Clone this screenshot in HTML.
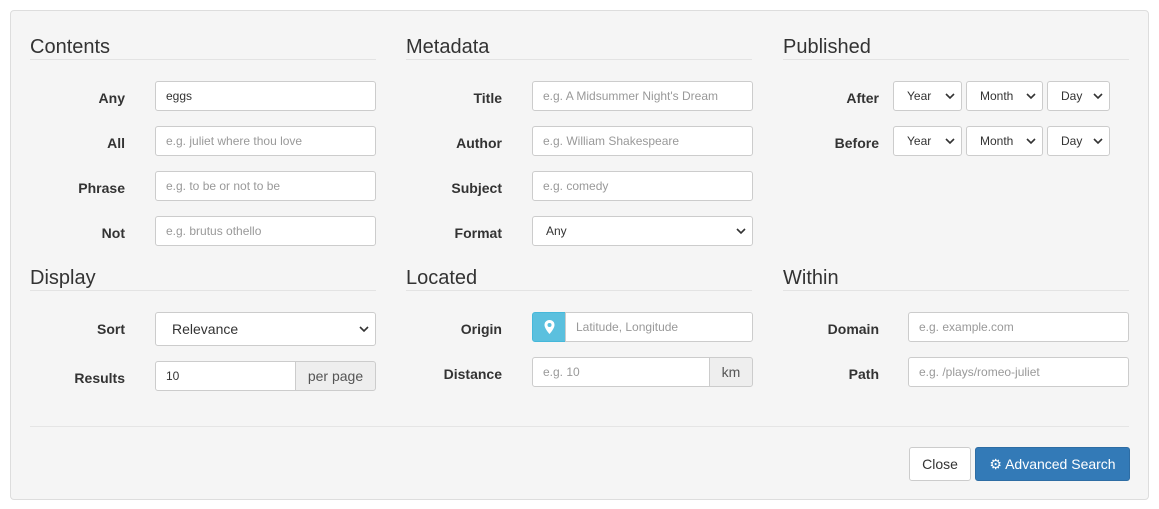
<!DOCTYPE html>
<html><head><style>
*{box-sizing:border-box}
body{margin:0;background:#fff;font-family:"Liberation Sans",sans-serif;color:#333;width:1159px;height:509px;position:relative;overflow:hidden}
.panel{position:absolute;left:10px;top:10px;width:1139px;height:490px;background:#f5f5f5;border:1px solid #ddd;border-radius:4px}
.a{position:absolute}
h3{position:absolute;margin:0;font-weight:normal;font-size:20px;color:#333;border-bottom:1px solid #e3e3e3;width:346px;height:26px;line-height:26px}
.lb{position:absolute;font-weight:bold;font-size:14px;text-align:right;color:#333}
.in{position:absolute;background:#fff;border:1px solid #ccc;border-radius:3px;font-size:12px;color:#999;padding-left:10px;height:30px;line-height:28px}
.v{color:#333}
.sel{position:absolute;background:#fff;border:1px solid #ccc;border-radius:3px;font-size:12px;color:#333;padding-left:13px;height:30px;line-height:28px}
.sel svg{position:absolute;right:6px;top:10px}
.ad{position:absolute;background:#eee;border:1px solid #ccc;border-radius:0 3px 3px 0;font-size:14px;color:#555;text-align:center;height:30px;line-height:28px}
.btn{position:absolute;border-radius:3px;font-size:14px;text-align:center;height:34px;line-height:32px}
</style></head><body>
<div class="panel"></div>
<h3 style="left:30px;top:34px">Contents</h3>
<h3 style="left:406px;top:34px">Metadata</h3>
<h3 style="left:783px;top:34px">Published</h3>
<h3 style="left:30px;top:265px">Display</h3>
<h3 style="left:406px;top:265px">Located</h3>
<h3 style="left:783px;top:265px">Within</h3>

<div class="lb" style="left:30px;width:95px;top:90px">Any</div>
<div class="in v" style="left:155px;top:81px;width:221px">eggs</div>
<div class="lb" style="left:30px;width:95px;top:135px">All</div>
<div class="in" style="left:155px;top:126px;width:221px">e.g. juliet where thou love</div>
<div class="lb" style="left:30px;width:95px;top:180px">Phrase</div>
<div class="in" style="left:155px;top:171px;width:221px">e.g. to be or not to be</div>
<div class="lb" style="left:30px;width:95px;top:225px">Not</div>
<div class="in" style="left:155px;top:216px;width:221px">e.g. brutus othello</div>

<div class="lb" style="left:406px;width:96px;top:90px">Title</div>
<div class="in" style="left:532px;top:81px;width:221px">e.g. A Midsummer Night's Dream</div>
<div class="lb" style="left:406px;width:96px;top:135px">Author</div>
<div class="in" style="left:532px;top:126px;width:221px">e.g. William Shakespeare</div>
<div class="lb" style="left:406px;width:96px;top:180px">Subject</div>
<div class="in" style="left:532px;top:171px;width:221px">e.g. comedy</div>
<div class="lb" style="left:406px;width:96px;top:225px">Format</div>
<div class="sel" style="left:532px;top:216px;width:221px">Any<svg width="10" height="8" viewBox="0 0 10 8"><path d="M1 2l4 4 4-4" stroke="#333" stroke-width="1.6" fill="none"/></svg></div>

<div class="lb" style="left:783px;width:96px;top:90px">After</div>
<div class="sel" style="left:893px;top:81px;width:69px">Year<svg width="10" height="8" viewBox="0 0 10 8"><path d="M1 2l4 4 4-4" stroke="#333" stroke-width="1.6" fill="none"/></svg></div>
<div class="sel" style="left:966px;top:81px;width:77px">Month<svg width="10" height="8" viewBox="0 0 10 8"><path d="M1 2l4 4 4-4" stroke="#333" stroke-width="1.6" fill="none"/></svg></div>
<div class="sel" style="left:1047px;top:81px;width:63px">Day<svg width="10" height="8" viewBox="0 0 10 8"><path d="M1 2l4 4 4-4" stroke="#333" stroke-width="1.6" fill="none"/></svg></div>
<div class="lb" style="left:783px;width:96px;top:135px">Before</div>
<div class="sel" style="left:893px;top:126px;width:69px">Year<svg width="10" height="8" viewBox="0 0 10 8"><path d="M1 2l4 4 4-4" stroke="#333" stroke-width="1.6" fill="none"/></svg></div>
<div class="sel" style="left:966px;top:126px;width:77px">Month<svg width="10" height="8" viewBox="0 0 10 8"><path d="M1 2l4 4 4-4" stroke="#333" stroke-width="1.6" fill="none"/></svg></div>
<div class="sel" style="left:1047px;top:126px;width:63px">Day<svg width="10" height="8" viewBox="0 0 10 8"><path d="M1 2l4 4 4-4" stroke="#333" stroke-width="1.6" fill="none"/></svg></div>

<div class="lb" style="left:30px;width:95px;top:321px">Sort</div>
<div class="sel" style="left:155px;top:312px;width:221px;height:34px;line-height:32px;font-size:14px;padding-left:16px">Relevance<svg width="10" height="8" viewBox="0 0 10 8" style="top:12px"><path d="M1 2l4 4 4-4" stroke="#333" stroke-width="1.6" fill="none"/></svg></div>
<div class="lb" style="left:30px;width:95px;top:370px">Results</div>
<div class="in v" style="left:155px;top:361px;width:141px;border-radius:3px 0 0 3px">10</div>
<div class="ad" style="left:295px;top:361px;width:81px">per page</div>

<div class="lb" style="left:406px;width:96px;top:321px">Origin</div>
<div class="a" style="left:532px;top:312px;width:34px;height:30px;background:#5bc0de;border:1px solid #46b8da;border-radius:3px 0 0 3px"><svg class="a" style="left:11px;top:7px" width="11" height="14" viewBox="0 0 11 14"><path d="M5.5 0C2.5 0 .5 2.2.5 5c0 3.5 5 9 5 9s5-5.5 5-9C10.5 2.2 8.5 0 5.5 0z" fill="#fff"/><circle cx="5.5" cy="5" r="2" fill="#5bc0de"/></svg></div>
<div class="in" style="left:565px;top:312px;width:188px;border-radius:0 3px 3px 0">Latitude, Longitude</div>
<div class="lb" style="left:406px;width:96px;top:366px">Distance</div>
<div class="in" style="left:532px;top:357px;width:178px;border-radius:3px 0 0 3px">e.g. 10</div>
<div class="ad" style="left:709px;top:357px;width:44px">km</div>

<div class="lb" style="left:783px;width:96px;top:321px">Domain</div>
<div class="in" style="left:908px;top:312px;width:221px">e.g. example.com</div>
<div class="lb" style="left:783px;width:96px;top:366px">Path</div>
<div class="in" style="left:908px;top:357px;width:221px">e.g. /plays/romeo-juliet</div>

<div class="a" style="left:30px;top:426px;width:1099px;border-top:1px solid #e5e5e5"></div>
<div class="btn" style="left:909px;top:447px;width:62px;background:#fff;border:1px solid #ccc;color:#333">Close</div>
<div class="btn" style="left:975px;top:447px;width:155px;background:#337ab7;border:1px solid #2e6da4;color:#fff">&#9881; Advanced Search</div>
</body></html>
